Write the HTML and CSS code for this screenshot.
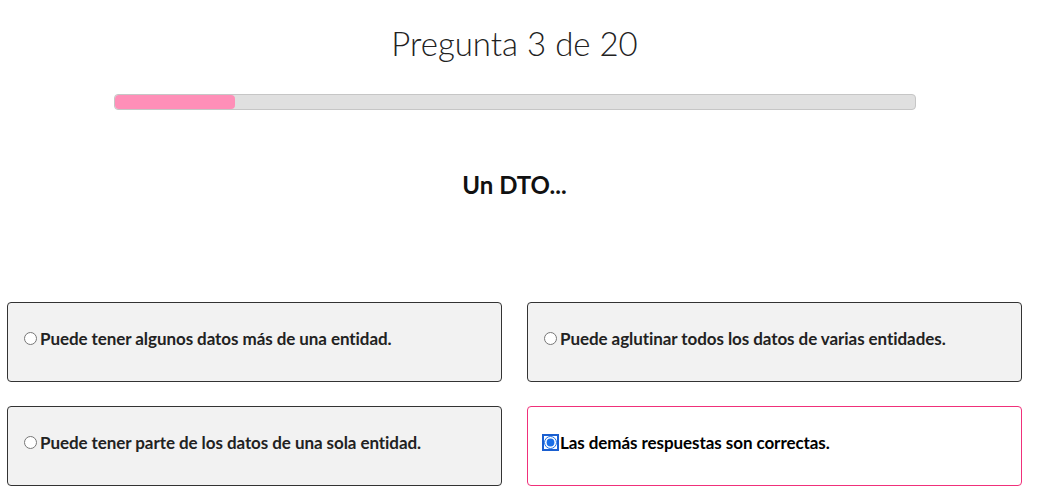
FILE: index.html
```html
<!DOCTYPE html>
<html lang="es">
<head>
<meta charset="utf-8">
<link rel="stylesheet" href="styles.css">
</head>
<body>
<div class="quiz">
  <h1 class="counter">Pregunta 3 de 20</h1>
  <div class="progress"><div class="progress-fill" style="width: 15%"></div></div>
  <h2 class="question">Un DTO...</h2>
  <div class="options">
    <label class="option"><input type="radio" name="q"><span>Puede tener algunos datos más de una entidad.</span></label>
    <label class="option"><input type="radio" name="q"><span>Puede aglutinar todos los datos de varias entidades.</span></label>
    <label class="option"><input type="radio" name="q"><span>Puede tener parte de los datos de una sola entidad.</span></label>
    <label class="option selected"><input type="radio" name="q" checked class="focused"><span>Las demás respuestas son correctas.</span></label>
  </div>
</div>
</body>
</html>
```

FILE: styles.css
```css
html, body {
  margin: 0;
  padding: 0;
  background: #fff;
}
body {
  font-family: Lato, "Open Sans", sans-serif;
  color: #222;
}
.quiz {
  width: 1015px;
  margin-left: 7px;
  display: flex;
  flex-direction: column;
  align-items: center;
  padding-top: 20px;
}
.counter {
  margin: 0;
  font-weight: 300;
  font-size: 33px;
  line-height: 46px;
  color: #222;
}
.progress {
  margin-top: 28px;
  width: 800px;
  height: 14px;
  border: 1px solid #c6c6c6;
  border-radius: 4px;
  background: #e0e0e0;
  overflow: hidden;
}
.progress-fill {
  height: 100%;
  background: #ff8fb8;
  border-radius: 4px;
}
.question {
  margin: 60px 0 0;
  font-size: 24px;
  font-weight: 700;
  line-height: 30px;
  color: #111;
}
.options {
  margin-top: 102px;
  width: 100%;
  display: grid;
  grid-template-columns: 1fr 1fr;
  column-gap: 25px;
  row-gap: 24px;
}
.option {
  display: block;
  box-sizing: border-box;
  height: 80px;
  border: 1px solid #333;
  border-radius: 4px;
  background: #f2f2f2;
  padding: 25px 11px 0;
  font-size: 17px;
  letter-spacing: -0.07px;
  font-weight: 700;
  color: #222;
}
.option input {
  margin: 3px 3px 0 5px;
  width: 13px;
  height: 13px;
}
.option.selected {
  background: #fff;
  border-color: #f0307a;
  color: #000;
}
.option input.focused {
  accent-color: #1a6fe8;
  outline: 2px solid #1a5fd0;
  outline-offset: 0;
  border-radius: 4px;
}
```
